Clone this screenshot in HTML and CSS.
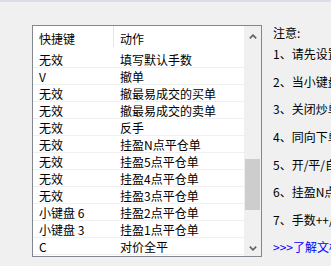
FILE: index.html
```html
<!DOCTYPE html>
<html lang="zh-CN">
<head>
<meta charset="utf-8">
<title>快捷键</title>
<link rel="stylesheet" href="styles.css">
</head>
<body>
<div class="topband"></div>
<div class="main">
  <div class="listbox">
    <div class="table">
      <div class="head">
        <div class="c1">快捷键</div>
        <div class="hsep"></div>
        <div class="c2">动作</div>
      </div>
      <div class="row"><div class="c1">无效</div><div class="c2">填写默认手数</div></div>
      <div class="row"><div class="c1">V</div><div class="c2">撤单</div></div>
      <div class="row"><div class="c1">无效</div><div class="c2">撤最易成交的买单</div></div>
      <div class="row"><div class="c1">无效</div><div class="c2">撤最易成交的卖单</div></div>
      <div class="row"><div class="c1">无效</div><div class="c2">反手</div></div>
      <div class="row"><div class="c1">无效</div><div class="c2">挂盈N点平仓单</div></div>
      <div class="row"><div class="c1">无效</div><div class="c2">挂盈5点平仓单</div></div>
      <div class="row"><div class="c1">无效</div><div class="c2">挂盈4点平仓单</div></div>
      <div class="row"><div class="c1">无效</div><div class="c2">挂盈3点平仓单</div></div>
      <div class="row"><div class="c1">小键盘 6</div><div class="c2">挂盈2点平仓单</div></div>
      <div class="row"><div class="c1">小键盘 3</div><div class="c2">挂盈1点平仓单</div></div>
      <div class="row"><div class="c1">C</div><div class="c2">对价全平</div></div>
    </div>
    <div class="scrollbar">
      <div class="arrow arrow-up">
        <svg width="8" height="5" viewBox="0 0 8 5"><path d="M0.8 4.4 L4 1.2 L7.2 4.4" fill="none" stroke="#606060" stroke-width="1.6"/></svg>
      </div>
      <div class="track"><div class="thumb"></div></div>
      <div class="arrow arrow-down">
        <svg width="8" height="5" viewBox="0 0 8 5"><path d="M0.8 0.6 L4 3.8 L7.2 0.6" fill="none" stroke="#606060" stroke-width="1.6"/></svg>
      </div>
    </div>
  </div>
  <div class="notes">
    <div class="title">注意:</div>
    <div class="note">1、请先设置快捷键</div>
    <div class="note">2、当小键盘锁定时</div>
    <div class="note">3、关闭炒单模式后</div>
    <div class="note">4、同向下单时按默</div>
    <div class="note">5、开/平/自动开平</div>
    <div class="note">6、挂盈N点平仓单</div>
    <div class="note">7、手数++/--调整</div>
    <a class="link" href="#">&gt;&gt;&gt;了解文档详情</a>
  </div>
</div>
</body>
</html>
```
FILE: styles.css
```css
html, body {
  margin: 0;
  padding: 0;
  overflow: hidden;
}
body {
  width: 331px;
  height: 266px;
  background: #f0f0f0;
  font-family: "Noto Sans CJK SC", "Noto Sans", sans-serif;
  font-size: 12px;
  color: #000;
}
.topband {
  height: 2px;
  background: #dcdcea;
}
.main {
  display: flex;
  padding: 23px 0 0 32px;
}
.listbox {
  flex: 0 0 auto;
  width: 230px;
  height: 232px;
  box-sizing: border-box;
  border: 1px solid #828790;
  background: #fff;
  display: flex;
}
.table {
  flex: 1;
  min-width: 0;
  overflow: hidden;
}
.head {
  display: flex;
  height: 25px;
  line-height: 25px;
}
.hsep {
  width: 1px;
  height: 21px;
  background: #e5e5e5;
}
.c1 {
  width: 80px;
  padding-left: 6px;
  box-sizing: border-box;
  white-space: nowrap;
}
.c2 {
  flex: 1;
  padding-left: 6px;
  white-space: nowrap;
}
.row {
  display: flex;
  height: 17px;
  box-sizing: border-box;
  padding-top: 2px;
  line-height: 14px;
  border-bottom: 1px solid #f0f0f0;
}
.row .c1 {
  width: 81px;
}
.scrollbar {
  width: 17px;
  flex: 0 0 17px;
  background: #f0f0f0;
  display: flex;
  flex-direction: column;
}
.arrow {
  height: 17px;
  display: flex;
  justify-content: center;
  align-items: center;
}
.arrow-up {
  padding-top: 3px;
  box-sizing: border-box;
}
.arrow-down {
  padding-top: 1px;
  box-sizing: border-box;
}
.track {
  flex: 1;
}
.thumb {
  margin-top: 116px;
  margin-left: 1px;
  width: 15px;
  height: 51px;
  background: #cdcdcd;
}
.notes {
  flex: 1;
  min-width: 0;
  margin-left: 11px;
  overflow: hidden;
  white-space: nowrap;
  display: flex;
  flex-direction: column;
  gap: 11.6px;
  line-height: 16px;
}
.title {
  margin-bottom: -6.3px;
}
.link {
  color: #0000ff;
  text-decoration: none;
}
```
